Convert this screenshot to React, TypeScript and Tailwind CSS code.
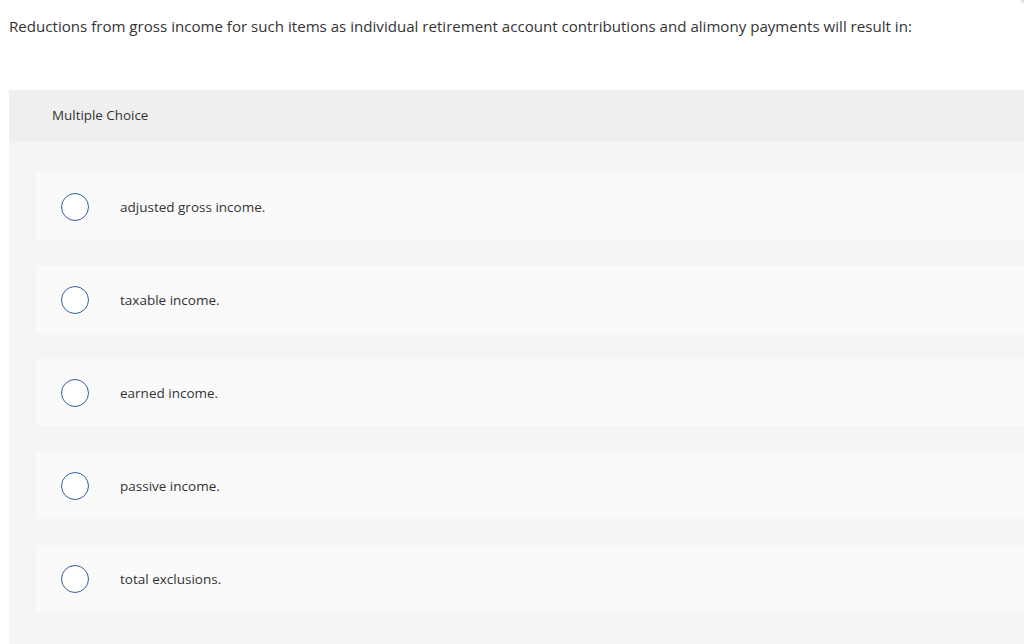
import React from "react";

const options = [
  "adjusted gross income.",
  "taxable income.",
  "earned income.",
  "passive income.",
  "total exclusions.",
];

export default function App() {
  return (
    <div
      className="relative w-[1024px] h-[644px] overflow-hidden bg-white text-[#333333]"
      style={{ fontFamily: "'Open Sans', sans-serif" }}
    >
      <div className="absolute right-[-6px] top-[-6px] w-[10px] h-[10px] rounded-full bg-[#e3e8f4]" />
      <p className="pl-[9px] pt-[16px] h-[90px] text-[15.1px] leading-[20px]">
        Reductions from gross income for such items as individual retirement account contributions and alimony payments will result in:
      </p>
      <div className="ml-[9px] bg-[#f5f5f5] pb-[40px]">
        <div className="h-[51px] bg-[#efefef] pl-[43px] flex items-center text-[13.4px]">
          Multiple Choice
        </div>
        <div className="pt-[32px] pl-[27px] flex flex-col gap-[26px]">
          {options.map((o) => (
            <div key={o} className="h-[67px] bg-[#fafafa] flex items-center">
              <div className="ml-[25px] w-[28px] h-[28px] rounded-full border-[1.5px] border-[#34609a] bg-white" />
              <span className="ml-[31px] pt-[1px] text-[13.5px]">{o}</span>
            </div>
          ))}
        </div>
      </div>
    </div>
  );
}
